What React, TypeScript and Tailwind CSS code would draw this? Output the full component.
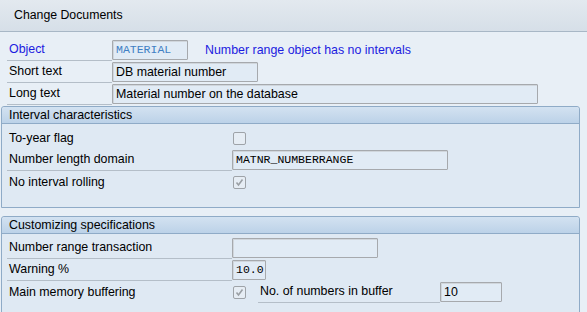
import React from 'react';

const font = "font-['Liberation_Sans',Tahoma,sans-serif]";
const mono = "font-['Liberation_Mono','Courier_New',monospace]";

function Label({ children, width, blue, line = true }: { children: React.ReactNode; width: string; blue?: boolean; line?: boolean }) {
  return (
    <div
      className={`${width} h-[22px] shrink-0 flex items-center pl-[2px] text-[12.4px] ${blue ? 'text-[#1c1ce0]' : 'text-black'} ${
        line ? 'border-b border-[#b4bec8]' : ''
      }`}
    >
      {children}
    </div>
  );
}

function Field({ value, width, monoText, blueText }: { value: string; width: string; monoText?: boolean; blueText?: boolean }) {
  return (
    <div
      className={`${width} h-[20px] shrink-0 flex items-center px-[3px] bg-[#e1ebf5] border border-[#a6a9ad] rounded-[1px] shadow-[inset_1px_1px_0_#d0d6dc] ${
        monoText ? `${mono} text-[11.5px]` : 'text-[12.4px]'
      } ${blueText ? 'text-[#3f7fc4]' : 'text-black'}`}
    >
      {value}
    </div>
  );
}

function Check({ checked }: { checked?: boolean }) {
  return (
    <div className="w-[13px] h-[13px] ml-[1px] border border-[#9ea3a8] rounded-[2px] bg-[#e6edf4] flex items-center justify-center">
      {checked && (
        <svg width="9" height="9" viewBox="0 0 9 9">
          <path d="M1.5 4.5 L3.5 7 L7.5 1.5" fill="none" stroke="#9a9fa4" strokeWidth="1.6" />
        </svg>
      )}
    </div>
  );
}

function Group({ title, children }: { title: string; children: React.ReactNode }) {
  return (
    <div className="ml-[1px] w-[579px] border border-[#8fabc7] rounded-t-[3px] bg-[#dfe9f3]">
      <div className="h-[17px] flex items-center pl-[7px] text-[12.4px] text-black bg-gradient-to-b from-[#d3e2f1] to-[#bcd2e8] border-b border-[#8fabc7] rounded-t-[3px]">
        {title}
      </div>
      {children}
    </div>
  );
}

export default function App() {
  return (
    <div className={`${font} w-[587px] h-[312px] overflow-hidden bg-[#e8eff6]`}>
      <div className="h-[32px] flex items-center pl-[14px] text-[12.3px] text-black bg-gradient-to-b from-[#e3e9ef] to-[#d6dfe8] border-b border-[#a8b7c6]">
        Change Documents
      </div>

      <div className="pt-[7px] pl-[7px]">
        <div className="flex items-center">
          <Label width="w-[105px]" blue>Object</Label>
          <Field value="MATERIAL" width="w-[76px]" monoText blueText />
          <span className="ml-[17px] text-[12.4px] text-[#1c1ce0]">Number range object has no intervals</span>
        </div>
        <div className="flex items-center">
          <Label width="w-[105px]">Short text</Label>
          <Field value="DB material number" width="w-[146px]" />
        </div>
        <div className="flex items-center">
          <Label width="w-[105px]">Long text</Label>
          <Field value="Material number on the database" width="w-[426px]" />
        </div>
      </div>

      <div className="mt-[1px]">
        <Group title="Interval characteristics">
          <div className="pt-[3px] pl-[5px] pb-[14px]">
            <div className="flex items-center">
              <Label width="w-[225px]" line={false}>To-year flag</Label>
              <Check />
            </div>
            <div className="flex items-center">
              <Label width="w-[225px]">Number length domain</Label>
              <Field value="MATNR_NUMBERRANGE" width="w-[216px]" monoText />
            </div>
            <div className="flex items-center">
              <Label width="w-[225px]" line={false}>No interval rolling</Label>
              <Check checked />
            </div>
          </div>
        </Group>
      </div>

      <div className="mt-[8px]">
        <Group title="Customizing specifications">
          <div className="pt-[3px] pl-[5px] pb-[14px]">
            <div className="flex items-center">
              <Label width="w-[225px]">Number range transaction</Label>
              <Field value="" width="w-[146px]" />
            </div>
            <div className="flex items-center">
              <Label width="w-[225px]">Warning %</Label>
              <Field value="10.0" width="w-[34px]" monoText />
            </div>
            <div className="flex items-center">
              <Label width="w-[225px]" line={false}>Main memory buffering</Label>
              <Check checked />
              <div className="ml-[12px]">
                <Label width="w-[182px]">No. of numbers in buffer</Label>
              </div>
              <Field value="10" width="w-[62px]" />
            </div>
          </div>
        </Group>
      </div>
    </div>
  );
}
